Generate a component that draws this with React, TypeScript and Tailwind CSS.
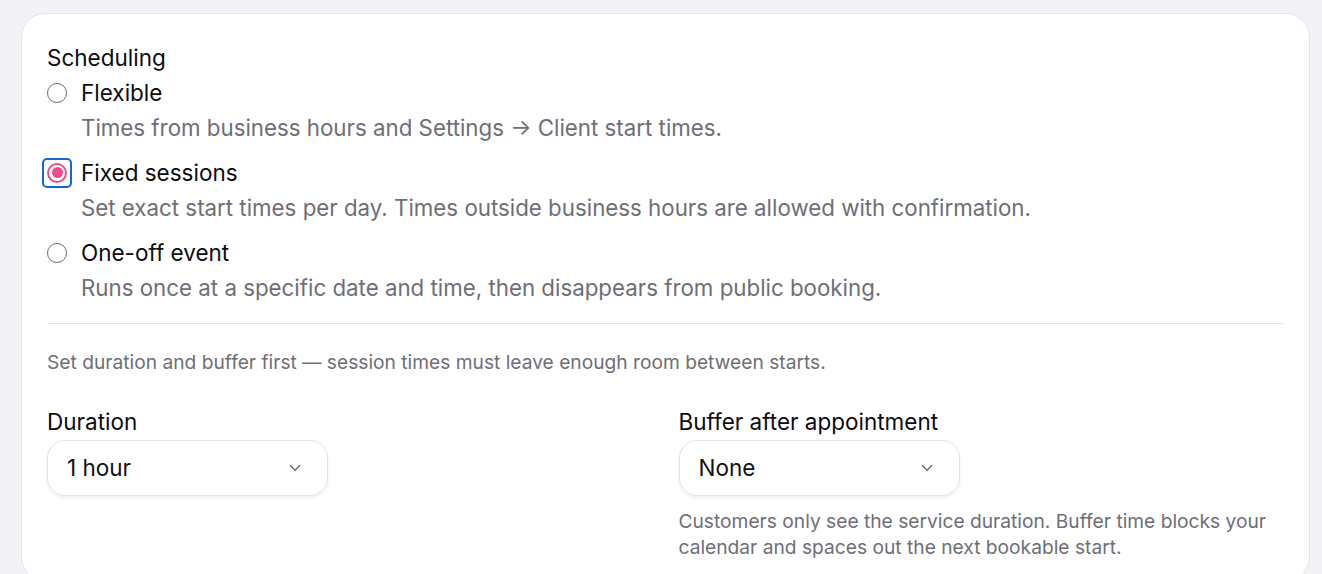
import React from 'react';
import { ChevronDown } from 'lucide-react';

type Option = { id: string; title: string; hint: string };

const options: Option[] = [
  { id: 'flexible', title: 'Flexible', hint: 'Times from business hours and Settings → Client start times.' },
  { id: 'fixed', title: 'Fixed sessions', hint: 'Set exact start times per day. Times outside business hours are allowed with confirmation.' },
  { id: 'oneoff', title: 'One-off event', hint: 'Runs once at a specific date and time, then disappears from public booking.' },
];

const Radio = ({ checked }: { checked: boolean }) => {
  if (!checked) {
    return <span className="block h-[20px] w-[20px] shrink-0 rounded-full border-[1.5px] border-[#6e6e73] bg-white" />;
  }
  return (
    <span className="-m-[5px] flex h-[30px] w-[30px] shrink-0 items-center justify-center rounded-[5px] border-2 border-[#1766c9]">
      <span className="flex h-[20px] w-[20px] items-center justify-center rounded-full border-2 border-[#ee4c8b] bg-white">
        <span className="block h-[11px] w-[11px] rounded-full bg-[#ee4c8b]" />
      </span>
    </span>
  );
};

const Select = ({ value }: { value: string }) => (
  <button className="flex h-[56px] w-[281px] items-center justify-between rounded-[18px] border border-[#e4e4e8] bg-white pl-[19px] pr-[23px] text-[22.5px] text-[#111114] shadow-[0_2px_4px_rgba(0,0,0,0.06)]">
    <span>{value}</span>
    <ChevronDown className="h-[18px] w-[18px] text-[#707075]" strokeWidth={2} />
  </button>
);

export default function App() {
  const selected = 'fixed';
  return (
    <div className="min-h-[574px] bg-[#f3f3f7] pl-[21px] pr-[12px] pt-[13px] font-['Inter',sans-serif]">
      <div className="rounded-[24px] border border-[#e3e3e8] bg-white pb-[20px] pl-[25px] pr-[26px] pt-[26px]">
        <div className="text-[22.5px] leading-[35px] text-[#0c0c0f]">Scheduling</div>
        <div className="flex flex-col gap-[10px]">
          {options.map((o) => (
            <div key={o.id}>
              <div className="flex items-center gap-[14px]">
                <Radio checked={o.id === selected} />
                <span className="text-[22.5px] leading-[35px] text-[#0c0c0f]">{o.title}</span>
              </div>
              <p className="pl-[34px] text-[22.3px] leading-[35px] text-[#6e6e76]">{o.hint}</p>
            </div>
          ))}
        </div>
        <div className="mt-[18px] h-px bg-[#e6e6ea]" />
        <p className="mt-[26px] text-[19.2px] leading-[24px] text-[#6e6e76]">
          Set duration and buffer first — session times must leave enough room between starts.
        </p>
        <div className="mt-[34px] grid grid-cols-2 gap-x-[27px]">
          <div>
            <div className="mb-[4px] text-[22.5px] leading-[28px] text-[#0c0c0f]">Duration</div>
            <Select value="1 hour" />
          </div>
          <div>
            <div className="mb-[4px] text-[22.5px] leading-[28px] text-[#0c0c0f]">Buffer after appointment</div>
            <Select value="None" />
            <p className="mt-[12px] text-[19.2px] leading-[26px] text-[#6e6e76]">
              Customers only see the service duration. Buffer time blocks your calendar and spaces out the next bookable start.
            </p>
          </div>
        </div>
      </div>
    </div>
  );
}
